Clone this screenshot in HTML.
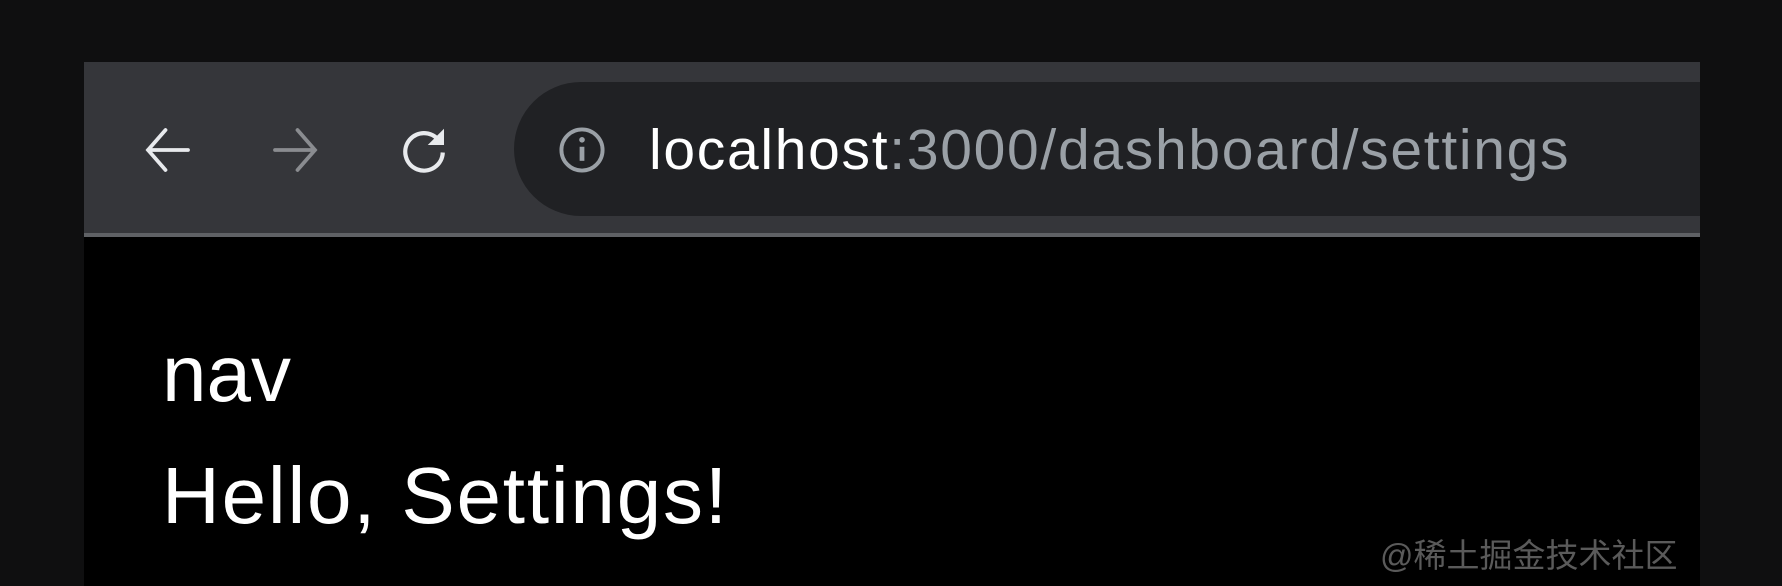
<!DOCTYPE html>
<html><head><meta charset="utf-8"><style>
html,body{margin:0;padding:0;width:1782px;height:586px;overflow:hidden;background:#0f0f10;font-family:"Liberation Sans","Noto Sans CJK SC",sans-serif}
.frame{position:absolute;left:84px;top:62px;width:1616px;height:524px;background:#000;overflow:hidden}
.bar{position:absolute;left:0;top:0;width:1616px;height:171px;background:#35363a;border-bottom:4px solid #5f6165}
.pill{position:absolute;left:430px;top:20px;width:1300px;height:134px;border-radius:67px;background:#202124}
.url{position:absolute;left:565px;top:55px;font-size:57px;letter-spacing:1.7px;line-height:66px;color:#fff;white-space:nowrap}
.url span{color:#9aa0a6}
svg{position:absolute}
.t{position:absolute;color:#fff;white-space:nowrap}
</style></head><body>
<div class="frame">
 <div class="bar">
  <div class="pill"></div>
  <svg style="left:54px;top:58px" width="60" height="60" viewBox="0 0 24 24" fill="none" stroke="#e8eaed" stroke-width="1.5" stroke-linecap="round"><path d="M20 12H4M11 4L4 12L11 20"/></svg>
  <svg style="left:181px;top:58px" width="60" height="60" viewBox="0 0 24 24" fill="none" stroke="#8a8c90" stroke-width="1.5" stroke-linecap="round"><path d="M4 12H20M13 4L20 12L13 20"/></svg>
  <svg style="left:310px;top:58px" width="60" height="60" viewBox="0 0 24 24" fill="none" stroke="#e8eaed" stroke-width="1.7"><path d="M18.5 9A7.5 7.5 0 1 0 19.5 13"/><path d="M20 3.5V10H13.5Z" fill="#e8eaed" stroke="none"/></svg>
  <svg style="left:472px;top:62px" width="52" height="52" viewBox="0 0 24 24" fill="none" stroke="#9aa0a6" stroke-width="1.8"><circle cx="12" cy="12" r="9.5"/><path d="M12 10.5V17" stroke-width="2.2"/><circle cx="12" cy="7.3" r="1.3" fill="#9aa0a6" stroke="none"/></svg>
  <div class="url">localhost<span>:3000/dashboard/settings</span></div>
 </div>
 <div class="t" style="left:78px;top:264px;font-size:80px;line-height:96px">nav</div>
 <div class="t" style="left:78px;top:386px;font-size:80px;line-height:96px;letter-spacing:1.8px">Hello, Settings!</div>
 <div class="t" style="left:1296px;top:474px;font-size:33px;line-height:40px;color:#5a5a5a">@稀土掘金技术社区</div>
</div>
</body></html>
